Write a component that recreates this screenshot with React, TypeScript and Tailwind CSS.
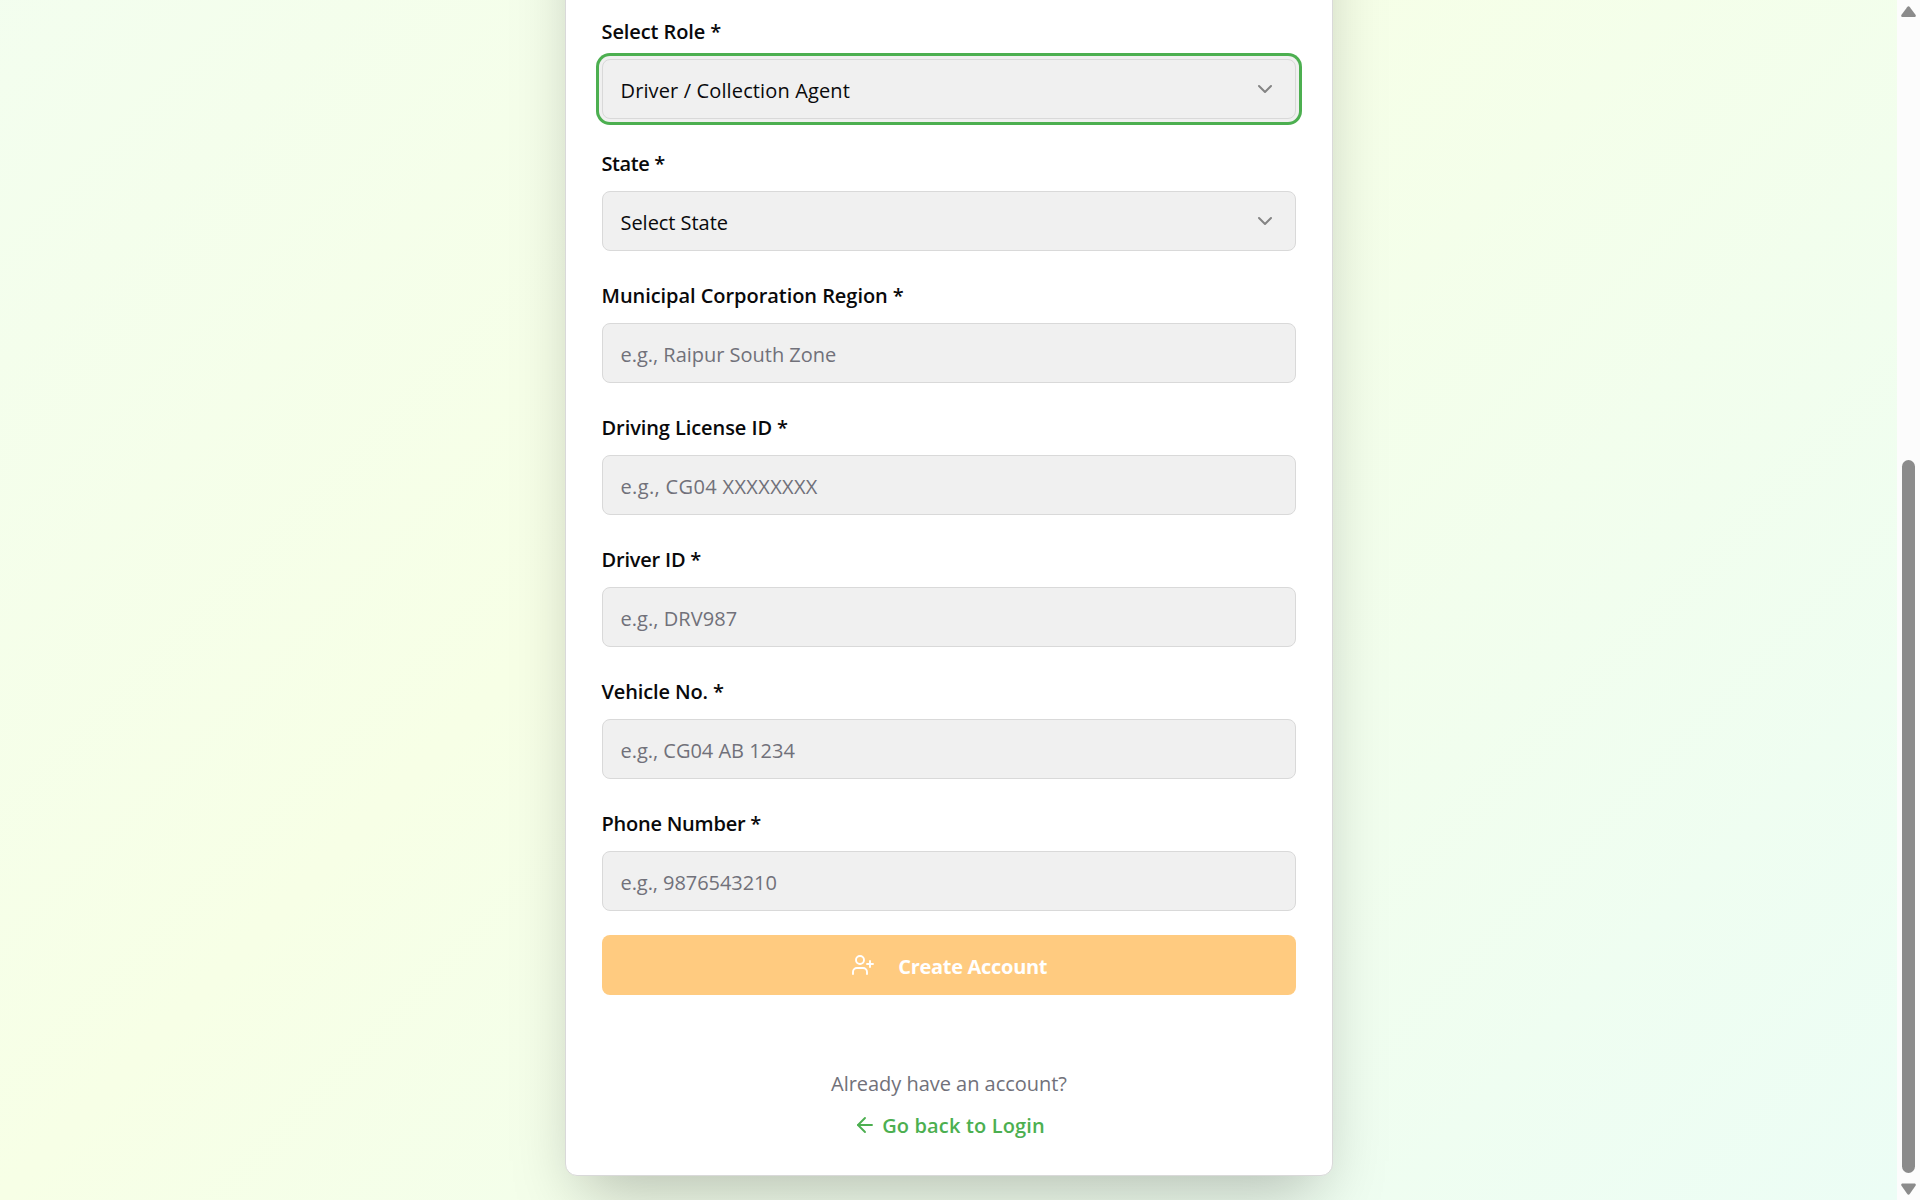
import { ArrowLeft, ChevronDown, UserPlus } from "lucide-react";

type Field = {
  label: string;
  labelClass: string;
  value: string;
  valueClass: string;
  select?: boolean;
  focused?: boolean;
};

const fields: Field[] = [
  {
    label: "Select Role *",
    labelClass: "tracking-[-0.1px]",
    value: "Driver / Collection Agent",
    valueClass: "tracking-[0.13px]",
    select: true,
    focused: true,
  },
  {
    label: "State *",
    labelClass: "tracking-[-0.4px]",
    value: "Select State",
    valueClass: "tracking-[-0.04px]",
    select: true,
  },
  {
    label: "Municipal Corporation Region *",
    labelClass: "tracking-[-0.05px]",
    value: "e.g., Raipur South Zone",
    valueClass: "tracking-[-0.02px]",
  },
  {
    label: "Driving License ID *",
    labelClass: "tracking-[-0.08px]",
    value: "e.g., CG04 XXXXXXXX",
    valueClass: "tracking-[0.35px]",
  },
  {
    label: "Driver ID *",
    labelClass: "tracking-[-0.2px]",
    value: "e.g., DRV987",
    valueClass: "tracking-[0.05px]",
  },
  {
    label: "Vehicle No. *",
    labelClass: "tracking-[-0.13px]",
    value: "e.g., CG04 AB 1234",
    valueClass: "tracking-[-0.02px]",
  },
  {
    label: "Phone Number *",
    labelClass: "tracking-[-0.24px]",
    value: "e.g., 9876543210",
    valueClass: "tracking-[-0.06px]",
  },
];

function FormField({ label, labelClass, value, valueClass, select, focused }: Field) {
  return (
    <div className="flex flex-col gap-[15px]">
      <label className={`-ml-[0.5px] h-[25px] pt-px font-[580] text-[#09090b] ${labelClass}`}>{label}</label>
      <div
        className={`flex h-[60px] items-center justify-between rounded-[8px] border border-[#d9d9d9] bg-[#f0f0f0] pl-[17.5px] pr-[18px] ${
          focused ? "shadow-[0_0_0_3px_#f0f0f0,0_0_0_6px_#4caf50]" : ""
        }`}
      >
        <span className={`pt-1 ${select ? "text-[#09090b]" : "text-[#71717a]"} ${valueClass}`}>
          {value}
        </span>
        {select && <ChevronDown size={24} strokeWidth={2} className="text-[#848484]" />}
      </div>
    </div>
  );
}

function ScrollBar() {
  return (
    <div className="flex h-full w-[23px] shrink-0 flex-col items-center justify-between bg-[#fcfcfc] pt-1.5 pb-[5px]">
      <svg width="15" height="11" viewBox="0 0 15 11" fill="#8b8b8b">
        <path d="M6.1 1.2a1.8 1.8 0 0 1 2.8 0l5.6 7.6c.7 1 .1 2.2-1 2.2h-12c-1.1 0-1.7-1.2-1-2.2z" />
      </svg>
      <div className="mt-auto mb-[10px] h-[713px] w-[13px] rounded-full bg-[#8b8b8b]" />
      <svg width="15" height="12" viewBox="0 0 15 12" fill="#8b8b8b">
        <path d="M6.1 10.8a1.8 1.8 0 0 0 2.8 0l5.6-8C15.200 1.700 14.600.5 13.500.5h-12C.4.5-.2 1.700.5 2.800z" />
      </svg>
    </div>
  );
}

export default function App() {
  return (
    <div className="flex h-[1200px] w-[1920px] overflow-hidden font-['Open_Sans','Noto_Sans',sans-serif] text-[20px] leading-6">
      <main className="flex h-full min-w-0 flex-1 flex-col justify-end overflow-hidden">
        <div className="flex h-[1949px] shrink-0 flex-col justify-end bg-linear-to-br/srgb from-[#f0fdf4] via-[#f7ffe6] to-[#ecfdf5] pb-6 pl-px">
          <section className="mx-auto flex h-[1800px] w-[768px] flex-col justify-end rounded-[12px] border border-[#d9d9d9] bg-white px-9 pb-[37px] shadow-[0_31px_62px_-15px_rgba(0,0,0,0.25)]">
            <form className="flex flex-col gap-8">
              {fields.map((field) => (
                <FormField key={field.label} {...field} />
              ))}
            </form>
            <button
              type="button"
              className="mt-6 flex h-[60px] items-center justify-center gap-[23.5px] rounded-[8px] bg-[#ffcb80] text-white"
            >
              <UserPlus size={24} strokeWidth={1.9} />
              <span className="pt-1 font-bold tracking-[-0.3px]">Create Account</span>
            </button>
            <div className="mt-[77px] flex flex-col items-center gap-[18px]">
              <p className="tracking-[-0.03px] text-[#71717a]">Already have an account?</p>
              <a className="flex items-center gap-[5px] text-[#4caf50]">
                <ArrowLeft size={24} strokeWidth={1.9} className="-mt-[3px]" />
                <span className="font-[580] tracking-[0.15px]">Go back to Login</span>
              </a>
            </div>
          </section>
        </div>
      </main>
      <ScrollBar />
    </div>
  );
}
